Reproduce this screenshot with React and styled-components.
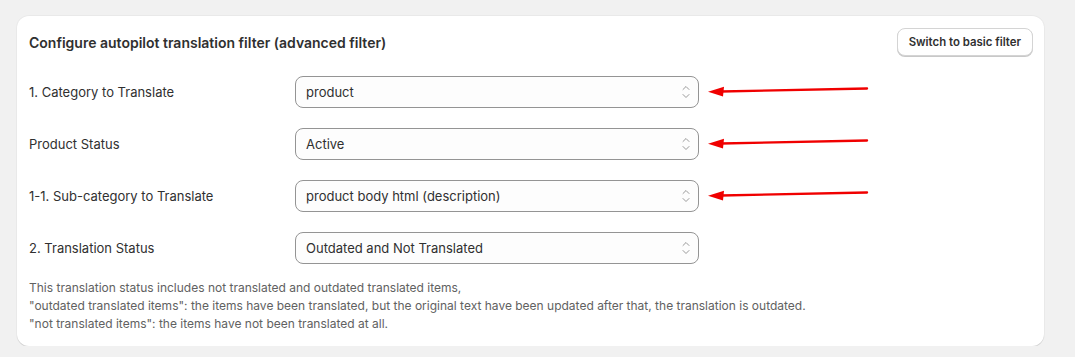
import styled, { createGlobalStyle } from "styled-components";

const GlobalStyle = createGlobalStyle`
  body {
    margin: 0;
    background: #f1f1f1;
    font-family: Inter, "Noto Sans", sans-serif;
    color: #303030;
  }
`;

const rows = [
  { label: "1. Category to Translate", value: "product", marked: true },
  { label: "Product Status", value: "Active", marked: true },
  { label: "1-1. Sub-category to Translate", value: "product body html (description)", marked: true },
  { label: "2. Translation Status", value: "Outdated and Not Translated", marked: false },
];

const Chevrons = () => (
  <svg width="12" height="18" viewBox="0 0 12 18" fill="none" stroke="#9a9a9a" strokeWidth="1" strokeLinecap="round" strokeLinejoin="round">
    <path d="M3 6.5 L6 3.5 L9 6.5" />
    <path d="M3 11.5 L6 14.5 L9 11.5" />
  </svg>
);

const Arrow = () => (
  <ArrowSvg width="162" height="14" viewBox="0 0 162 14">
    <path d="M160 3.5 L14 6.5" stroke="#f00000" strokeWidth="2.4" strokeLinecap="round" fill="none" />
    <path d="M1 6.8 L17 1.8 L16 11.5 Z" fill="#f00000" />
  </ArrowSvg>
);

const App = () => (
  <>
    <GlobalStyle />
    <Card>
      <Header>
        <Title>Configure autopilot translation filter (advanced filter)</Title>
        <Button>Switch to basic filter</Button>
      </Header>
      <Rows>
        {rows.map((r) => (
          <Row key={r.label}>
            <Label>{r.label}</Label>
            <Select>
              <span>{r.value}</span>
              <Chevrons />
            </Select>
            {r.marked && <Arrow />}
          </Row>
        ))}
      </Rows>
      <Help>
        This translation status includes not translated and outdated translated items,
        <br />
        "outdated translated items": the items have been translated, but the original text have been updated after that, the translation is outdated.
        <br />
        "not translated items": the items have not been translated at all.
      </Help>
    </Card>
  </>
);

const Card = styled.div`
  margin: 16px 0 0 17px;
  width: 1027px;
  box-sizing: border-box;
  background: #fff;
  border-radius: 12px;
  box-shadow: 0 1px 0 rgba(0, 0, 0, 0.1), 0 0 0 1px rgba(0, 0, 0, 0.03);
  padding: 12px 11px 13px 12px;
`;

const Header = styled.div`
  display: flex;
  justify-content: space-between;
  align-items: center;
  height: 28px;
`;

const Title = styled.h2`
  margin: 0;
  font-size: 14px;
  font-weight: 600;
  color: #303030;
`;

const Button = styled.button`
  height: 28px;
  padding: 0 11px;
  font-family: inherit;
  font-size: 11.4px;
  font-weight: 600;
  color: #303030;
  background: #fff;
  border: 1px solid #d4d4d4;
  border-radius: 8px;
  box-shadow: 0 1px 0 #c8c8c8;
  cursor: pointer;
`;

const Rows = styled.div`
  display: flex;
  flex-direction: column;
  gap: 22px;
  margin-top: 21px;
`;

const Row = styled.div`
  display: flex;
  align-items: center;
  height: 30px;
`;

const Label = styled.div`
  width: 266px;
  font-size: 13px;
  color: #303030;
`;

const Select = styled.div`
  width: 404px;
  height: 32px;
  box-sizing: border-box;
  display: flex;
  align-items: center;
  justify-content: space-between;
  padding: 0 6px 0 10px;
  border: 1px solid #949494;
  border-radius: 8px;
  background: #fdfdfd;
  font-size: 13px;
  color: #303030;
`;

const ArrowSvg = styled.svg`
  margin-left: 8px;
`;

const Help = styled.p`
  margin: 16px 0 0;
  font-size: 12px;
  line-height: 18px;
  color: #616161;
`;

export default App;
